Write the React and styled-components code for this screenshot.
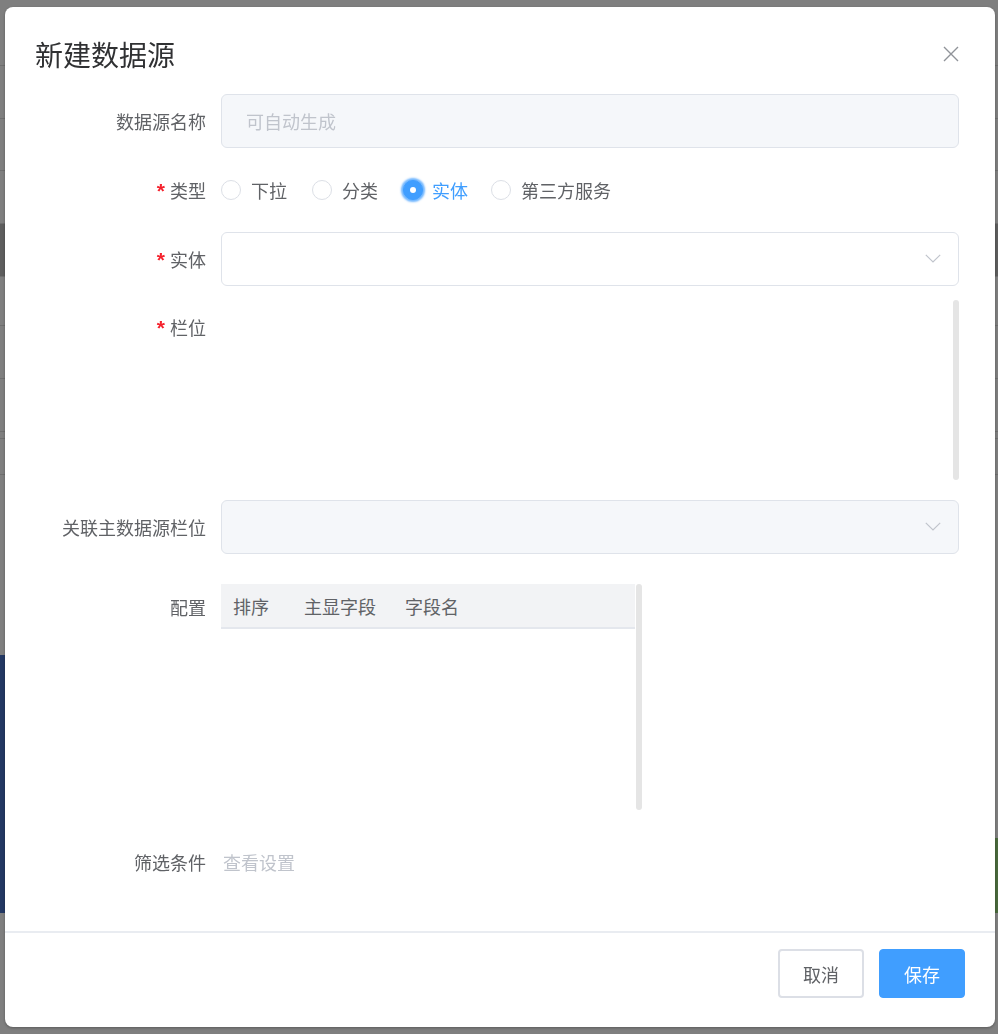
import React from 'react';
import styled, { createGlobalStyle } from 'styled-components';

const GlobalStyle = createGlobalStyle`
  html, body { margin: 0; padding: 0; }
  body {
    font-family: "Noto Sans CJK SC", "Noto Sans", sans-serif;
    width: 998px;
    height: 1034px;
    overflow: hidden;
    background: #fff;
  }
  * { box-sizing: border-box; }
`;

/* ---------- background page (under the mask) ---------- */
const Page = styled.div`
  width: 998px;
  height: 1034px;
  display: flex;
  flex-direction: column;
  background: #fff;
`;

const ListRow = styled.div`
  height: ${(p) => p.$h}px;
  flex-shrink: 0;
  border-bottom: 1px solid #dedede;
  background: ${(p) => (p.$active ? '#bcbcbc' : '#fff')};
`;

const Gap = styled.div`
  height: ${(p) => p.$h}px;
  flex-shrink: 0;
`;

const PanelRow = styled.div`
  height: 258px;
  display: flex;
  justify-content: space-between;
  flex-shrink: 0;
`;

const BluePanel = styled.div`
  width: 240px;
  background: #4670c6;
`;

const GreenColumn = styled.div`
  width: 240px;
  display: flex;
  flex-direction: column;
  justify-content: flex-end;
`;

const GreenBlock = styled.div`
  height: 75px;
  background: #94d478;
`;

/* ---------- modal ---------- */
const Mask = styled.div`
  position: fixed;
  inset: 0;
  background: rgba(0, 0, 0, 0.5);
  display: flex;
  align-items: flex-start;
  padding: 7px 0 0 5px;
`;

const Dialog = styled.div`
  width: 990px;
  height: 1020px;
  background: #fff;
  border-radius: 8px;
  display: flex;
  flex-direction: column;
  box-shadow: 0 1px 3px rgba(0, 0, 0, 0.3);
`;

const Header = styled.div`
  display: flex;
  align-items: center;
  justify-content: space-between;
  padding: 30px 36px 0 30px;
  height: 64px;
`;

const Title = styled.h2`
  margin: 0;
  font-size: 28px;
  line-height: 34px;
  font-weight: 400;
  color: #303133;
`;

const CloseButton = styled.button`
  width: 16px;
  height: 16px;
  padding: 0;
  border: none;
  background: none;
  display: flex;
  cursor: pointer;
`;

const Body = styled.div`
  padding: 23px 36px 42px 31px;
`;

const FormItem = styled.div`
  display: flex;
  margin-bottom: ${(p) => p.$mb || 0}px;
`;

const Label = styled.label`
  width: 185px;
  flex-shrink: 0;
  padding-right: 15px;
  text-align: right;
  font-size: 18px;
  line-height: 54px;
  color: #606266;
`;

const Required = styled.span`
  font-family: "Liberation Sans", Arial, sans-serif;
  font-weight: 700;
  font-size: 21px;
  line-height: 0;
  color: #f5222d;
  margin-right: 5px;
`;

const Control = styled.div`
  flex: 1;
  min-width: 0;
  position: relative;
`;

const TextInput = styled.input`
  width: 100%;
  height: 54px;
  border: 1px solid #dfe3ea;
  border-radius: 6px;
  background: ${(p) => (p.disabled ? '#f5f7fa' : '#fff')};
  padding: 0 44px 0 24px;
  font-family: inherit;
  font-size: 18px;
  color: #606266;
  outline: none;
  &::placeholder { color: #c0c4cc; }
`;

const Chevron = styled.svg`
  position: absolute;
  right: 18px;
  top: 50%;
  margin-top: -5px;
  width: 16px;
  height: 9px;
  pointer-events: none;
`;

const RadioGroup = styled.div`
  height: 54px;
  display: flex;
  align-items: center;
`;

const RadioItem = styled.label`
  display: flex;
  align-items: center;
  margin-right: ${(p) => (p.$checked ? 23 : 25)}px;
  font-size: 18px;
  color: ${(p) => (p.$checked ? '#409eff' : '#606266')};
  cursor: pointer;
`;

const RadioCircle = styled.span`
  width: 20px;
  height: 20px;
  border-radius: 50%;
  border: 1px solid ${(p) => (p.$checked ? '#409eff' : '#dcdfe6')};
  background: ${(p) => (p.$checked ? '#409eff' : '#fff')};
  box-shadow: ${(p) => (p.$checked ? '0 0 2px 2px rgba(64,158,255,0.75)' : 'none')};
  margin-right: ${(p) => (p.$checked ? 9 : 10)}px;
  display: flex;
  align-items: center;
  justify-content: center;
  &::after {
    content: '';
    width: 6px;
    height: 6px;
    border-radius: 50%;
    background: #fff;
    display: ${(p) => (p.$checked ? 'block' : 'none')};
  }
`;

const FieldArea = styled.div`
  height: 185px;
  display: flex;
  justify-content: flex-end;
`;

const ScrollThumb = styled.div`
  width: 6px;
  height: ${(p) => p.$h}px;
  border-radius: 3px;
  background: #e5e5e5;
  flex-shrink: 0;
`;

const TableBox = styled.div`
  margin-top: 4px;
  height: 226px;
  display: flex;
`;

const Table = styled.div`
  width: 414px;
`;

const TableHead = styled.div`
  height: 45px;
  background: #f2f3f5;
  border-bottom: 2px solid #e4e7ed;
  display: grid;
  grid-template-columns: 71px 101px 1fr;
  align-items: center;
`;

const HeadCell = styled.div`
  padding-left: 12px;
  font-size: 18px;
  color: #606266;
  white-space: nowrap;
`;

const TableScroll = styled.div`
  margin-left: 1px;
  display: flex;
`;

const LinkText = styled.span`
  font-size: 18px;
  line-height: 54px;
  color: #c0c4cc;
  padding-left: 2px;
  cursor: pointer;
`;

const Footer = styled.div`
  border-top: 2px solid #e9ecf1;
  padding: 16px 30px 29px;
  display: flex;
  justify-content: flex-end;
  gap: 15px;
`;

const Button = styled.button`
  width: 86px;
  height: 49px;
  border-radius: 4px;
  font-family: inherit;
  font-size: 18px;
  cursor: pointer;
  border: ${(p) => (p.$primary ? '1px solid #409eff' : '2px solid #dcdfe6')};
  background: ${(p) => (p.$primary ? '#409eff' : '#fff')};
  color: ${(p) => (p.$primary ? '#fff' : '#606266')};
`;

const ChevronIcon = () => (
  <Chevron viewBox="0 0 16 9">
    <path d="M0.8 0.8 L8 8 L15.2 0.8" fill="none" stroke="#c0c4cc" strokeWidth="1.2" />
  </Chevron>
);

const rowHeights = [66, 53, 52, 53, 53, 49, 53, 53, 7, 36];

const radios = [
  { label: '下拉', checked: false },
  { label: '分类', checked: false },
  { label: '实体', checked: true },
  { label: '第三方服务', checked: false },
];

export default function App() {
  return (
    <>
      <GlobalStyle />
      <Page>
        {rowHeights.map((h, i) => (
          <ListRow key={i} $h={h} $active={i === 4} />
        ))}
        <Gap $h={180} />
        <PanelRow>
          <BluePanel />
          <GreenColumn>
            <GreenBlock />
          </GreenColumn>
        </PanelRow>
      </Page>

      <Mask>
        <Dialog>
          <Header>
            <Title>新建数据源</Title>
            <CloseButton aria-label="关闭">
              <svg width="16" height="16" viewBox="0 0 16 16">
                <path d="M1 1 L15 15 M15 1 L1 15" stroke="#909399" strokeWidth="1.4" fill="none" />
              </svg>
            </CloseButton>
          </Header>

          <Body>
            <FormItem $mb={15}>
              <Label>数据源名称</Label>
              <Control>
                <TextInput disabled placeholder="可自动生成" />
              </Control>
            </FormItem>

            <FormItem $mb={15}>
              <Label><Required>*</Required>类型</Label>
              <Control>
                <RadioGroup>
                  {radios.map((r) => (
                    <RadioItem key={r.label} $checked={r.checked}>
                      <RadioCircle $checked={r.checked} />
                      {r.label}
                    </RadioItem>
                  ))}
                </RadioGroup>
              </Control>
            </FormItem>

            <FormItem $mb={14}>
              <Label><Required>*</Required>实体</Label>
              <Control>
                <TextInput readOnly />
                <ChevronIcon />
              </Control>
            </FormItem>

            <FormItem $mb={15}>
              <Label><Required>*</Required>栏位</Label>
              <Control>
                <FieldArea>
                  <ScrollThumb $h={180} />
                </FieldArea>
              </Control>
            </FormItem>

            <FormItem $mb={26}>
              <Label>关联主数据源栏位</Label>
              <Control>
                <TextInput disabled />
                <ChevronIcon />
              </Control>
            </FormItem>

            <FormItem $mb={25}>
              <Label>配置</Label>
              <Control>
                <TableBox>
                  <Table>
                    <TableHead>
                      <HeadCell>排序</HeadCell>
                      <HeadCell>主显字段</HeadCell>
                      <HeadCell>字段名</HeadCell>
                    </TableHead>
                  </Table>
                  <TableScroll>
                    <ScrollThumb $h={226} />
                  </TableScroll>
                </TableBox>
              </Control>
            </FormItem>

            <FormItem>
              <Label>筛选条件</Label>
              <Control>
                <LinkText>查看设置</LinkText>
              </Control>
            </FormItem>
          </Body>

          <Footer>
            <Button>取消</Button>
            <Button $primary>保存</Button>
          </Footer>
        </Dialog>
      </Mask>
    </>
  );
}
